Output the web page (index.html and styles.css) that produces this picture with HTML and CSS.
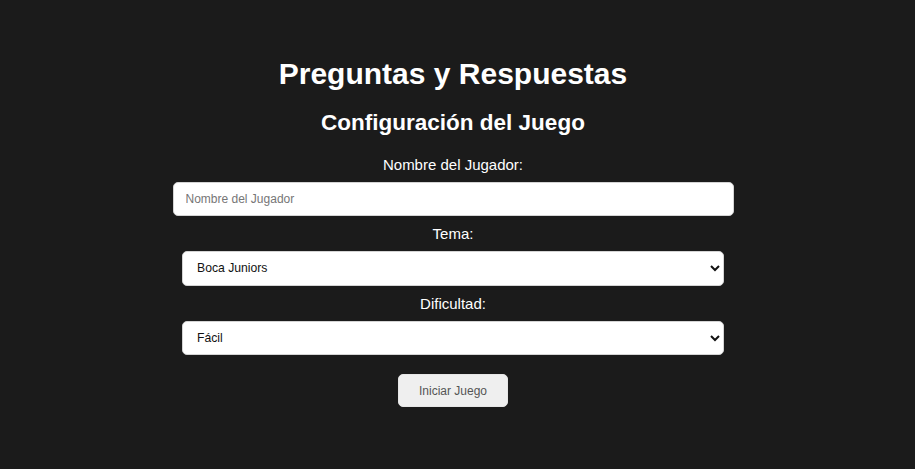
FILE: index.html
```html
<!DOCTYPE html>
<html lang="es">
<head>
<meta charset="utf-8">
<title>Preguntas y Respuestas</title>
<link rel="stylesheet" href="styles.css">
</head>
<body>
<main class="app">
  <h1 class="title">Preguntas y Respuestas</h1>
  <h2 class="subtitle">Configuración del Juego</h2>
  <form class="config">
    <label class="field-label" for="nombre">Nombre del Jugador:</label>
    <input class="text-input" id="nombre" type="text" placeholder="Nombre del Jugador">
    <label class="field-label" for="tema">Tema:</label>
    <select class="select-input" id="tema">
      <option>Boca Juniors</option>
    </select>
    <label class="field-label" for="dificultad">Dificultad:</label>
    <select class="select-input" id="dificultad">
      <option>Fácil</option>
    </select>
    <button class="start-btn" type="button">Iniciar Juego</button>
  </form>
</main>
</body>
</html>
```

FILE: styles.css
```css
html, body {
  margin: 0;
  background: #1b1b1b;
}

body {
  font-family: "Liberation Sans", Arial, sans-serif;
  color: #ffffff;
  padding-right: 9px;
}

.app {
  display: flex;
  flex-direction: column;
  align-items: center;
  padding-top: 57px;
}

.title {
  margin: 0 0 19px;
  font-size: 30px;
  font-weight: bold;
  line-height: normal;
}

.subtitle {
  margin: 0 0 20px;
  font-size: 22.5px;
  font-weight: bold;
  line-height: normal;
}

.config {
  display: flex;
  flex-direction: column;
  align-items: center;
  gap: 9px;
}

.field-label {
  display: block;
  font-size: 15px;
  line-height: 17px;
  color: #ffffff;
}

.text-input {
  box-sizing: border-box;
  width: 561px;
  height: 34px;
  margin: 0;
  padding: 0 12px;
  border: 1px solid #d4d4d4;
  border-radius: 5px;
  background: #ffffff;
  font-family: "Liberation Sans", Arial, sans-serif;
  font-size: 12px;
  color: #222222;
  outline: none;
}

.text-input::placeholder {
  color: #767676;
}

.select-input {
  box-sizing: border-box;
  width: 542px;
  height: 34.5px;
  margin: 0;
  padding: 0 10px;
  border: 1px solid #d4d4d4;
  border-radius: 5px;
  background-color: #ffffff;
  font-family: "Liberation Sans", Arial, sans-serif;
  font-size: 12.2px;
  color: #111111;
}

.start-btn {
  box-sizing: border-box;
  margin-top: 10px;
  width: 110px;
  height: 33px;
  padding: 0;
  border: 1px solid #e6e6e6;
  border-radius: 5px;
  background: #efefef;
  font-family: "Liberation Sans", Arial, sans-serif;
  font-size: 12px;
  color: #555555;
  cursor: pointer;
}
```
